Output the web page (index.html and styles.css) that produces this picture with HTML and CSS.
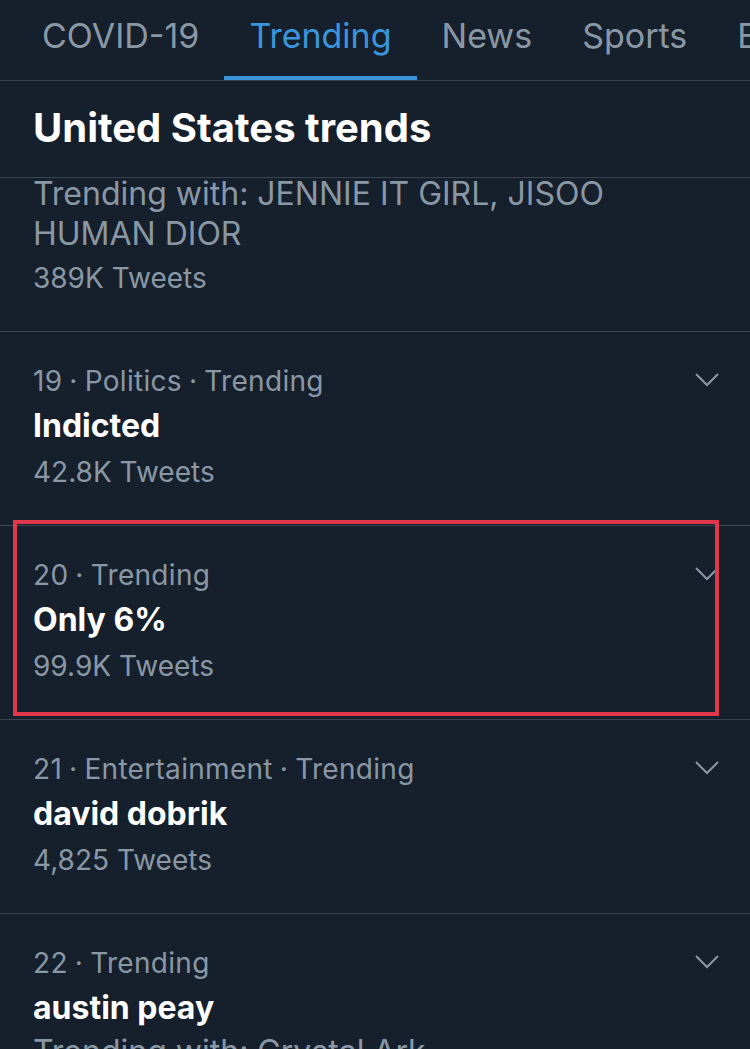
FILE: index.html
```html
<!DOCTYPE html>
<html>
<head>
<meta charset="utf-8">
<link rel="stylesheet" href="styles.css">
</head>
<body>
<div class="page">
  <nav class="tabs">
    <div class="tab">COVID-19</div>
    <div class="tab active">Trending</div>
    <div class="tab">News</div>
    <div class="tab">Sports</div>
    <div class="tab">Entertainment</div>
  </nav>
  <header class="title">United States trends</header>
  <div class="list">
    <div class="item first">
      <div class="with">Trending with: JENNIE IT GIRL, JISOO HUMAN DIOR</div>
      <div class="count">389K Tweets</div>
    </div>
    <div class="item">
      <div class="meta">19<span class="dot">·</span>Politics<span class="dot">·</span>Trending</div>
      <div class="name">Indicted</div>
      <div class="count">42.8K Tweets</div>
      <svg class="chev" viewBox="0 0 24 14"><path d="M1 1 L12 12 L23 1"/></svg>
    </div>
    <div class="item">
      <div class="meta">20<span class="dot">·</span>Trending</div>
      <div class="name">Only 6%</div>
      <div class="count">99.9K Tweets</div>
      <svg class="chev" viewBox="0 0 24 14"><path d="M1 1 L12 12 L23 1"/></svg>
      <div class="highlight"></div>
    </div>
    <div class="item">
      <div class="meta">21<span class="dot">·</span>Entertainment<span class="dot">·</span>Trending</div>
      <div class="name">david dobrik</div>
      <div class="count">4,825 Tweets</div>
      <svg class="chev" viewBox="0 0 24 14"><path d="M1 1 L12 12 L23 1"/></svg>
    </div>
    <div class="item">
      <div class="meta">22<span class="dot">·</span>Trending</div>
      <div class="name">austin peay</div>
      <div class="with">Trending with: Crystal Ark</div>
      <svg class="chev" viewBox="0 0 24 14"><path d="M1 1 L12 12 L23 1"/></svg>
    </div>
  </div>
</div>
</body>
</html>
```

FILE: styles.css
```css
* { box-sizing: border-box; }
html, body {
  margin: 0;
  padding: 0;
  background: #16202c;
}
.page {
  width: 750px;
  height: 1049px;
  overflow: hidden;
  font-family: "Inter", "Roboto", sans-serif;
  color: #8a98a5;
}
.tabs {
  display: flex;
  height: 81px;
  padding-left: 17px;
  border-bottom: 1px solid #3a4550;
  white-space: nowrap;
}
.tab {
  flex: none;
  padding: 19px 25px 0;
  font-size: 34px;
  line-height: 34px;
  color: #8a98a5;
}
.tab.active {
  color: #3a95dc;
  border-bottom: 4px solid #3a95dc;
}
.title {
  height: 97px;
  border-bottom: 1px solid #3a4550;
  padding: 23px 33px 0;
  font-size: 40px;
  line-height: 48px;
  font-weight: 700;
  color: #ffffff;
}
.item {
  position: relative;
  height: 194px;
  border-bottom: 1px solid #3a4550;
  padding: 29px 33px 0;
}
.item.first {
  display: flow-root;
  height: 154px;
  padding-top: 0;
}
.item.first .with { margin-top: -4px; }
.item.first .count { margin-top: 4px; }
.meta, .count {
  font-size: 28px;
  line-height: 40px;
}
.meta { letter-spacing: 0.3px; }
.dot { margin: 0 7px; }
.with {
  font-size: 32px;
  line-height: 40px;
  padding-right: 110px;
}
.count { margin-top: 2px; }
.name {
  margin-top: 1px;
  font-size: 32px;
  line-height: 48px;
  font-weight: 700;
  color: #fff;
}
.chev {
  position: absolute;
  left: 695px;
  top: 41px;
  width: 24px;
  height: 14px;
  fill: none;
  stroke: #8a98a5;
  stroke-width: 2;
}
.highlight {
  position: absolute;
  left: 13px;
  top: -6px;
  width: 706px;
  height: 196px;
  border: 4px solid #e0384a;
}
```
